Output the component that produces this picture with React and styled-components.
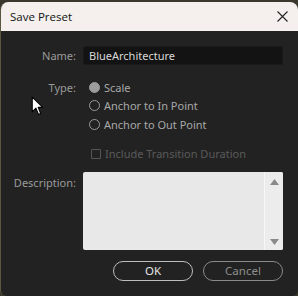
import styled, { createGlobalStyle } from "styled-components";

const Global = createGlobalStyle`
  html, body { margin: 0; padding: 0; }
  body {
    width: 298px;
    height: 296px;
    overflow: hidden;
    background: #3a372c;
    font-family: "Noto Sans", "Open Sans", sans-serif;
  }
`;

const Win = styled.div`
  position: relative;
  margin-top: 2px;
  width: 298px;
  height: 294px;
  box-sizing: border-box;
  border-left: 1px solid #5a5640;
  border-radius: 8px 8px 6px 6px;
  overflow: hidden;
  background: #222222;
  display: flex;
  flex-direction: column;
`;

const TitleBar = styled.div`
  height: 29px;
  flex: 0 0 29px;
  background: #f5f0ee;
  display: flex;
  align-items: center;
  justify-content: space-between;
  padding: 0 9px 0 9px;
  color: #111;
  font-family: "Open Sans", "Noto Sans", sans-serif;
  font-size: 11.5px;
`;

const Close = styled.svg`
  width: 11px;
  height: 11px;
  margin-right: 1px;
`;

const Body = styled.div`
  display: grid;
  grid-template-columns: 75px 200px;
  column-gap: 7px;
  padding: 15px 0 0 0;
  font-size: 11px;
  color: #a4a4a4;
`;

const Label = styled.div`
  text-align: right;
  line-height: 19px;
  margin-top: ${(p) => p.$top || 0}px;
  color: #9a9a9a;
`;

const Field = styled.div`
  margin-top: ${(p) => p.$top || 0}px;
`;

const TextInput = styled.div`
  height: 19px;
  box-sizing: border-box;
  background: #131313;
  border: 1px solid #1a1a1a;
  border-radius: 2px;
  color: #d8d8d8;
  line-height: 17px;
  padding-left: 5px;
  font-size: 11px;
`;

const RadioList = styled.div`
  display: flex;
  flex-direction: column;
`;

const Option = styled.div`
  display: flex;
  align-items: center;
  height: 18.5px;
  gap: 4px;
  padding-left: 6px;
  color: ${(p) => (p.$dim ? "#5a5a5a" : "#a8a8a8")};
  font-size: 11px;
`;

const Radio = styled.span`
  width: 11px;
  height: 11px;
  box-sizing: border-box;
  border-radius: 50%;
  border: 1.5px solid #9a9a9a;
  background: ${(p) => (p.$on ? "#9c9c9c" : "transparent")};
`;

const Check = styled.span`
  width: 10px;
  height: 10px;
  box-sizing: border-box;
  border: 1px solid #555;
  border-radius: 1px;
  margin-left: 2px;
`;

const Area = styled.div`
  height: 78px;
  display: flex;
  background: #e8e8e8;
  border-radius: 2px;
  overflow: hidden;
`;

const AreaText = styled.div`
  flex: 1;
`;

const Scroll = styled.div`
  width: 18px;
  border-left: 1px solid #f7f7f7;
  background: #ececec;
  display: flex;
  flex-direction: column;
  justify-content: space-between;
  align-items: center;
  padding: 7px 0 5px;
`;

const Arrow = styled.svg`
  width: 9px;
  height: 6px;
`;

const Buttons = styled.div`
  grid-column: 2;
  display: flex;
  justify-content: flex-end;
  gap: 10px;
  margin-top: 11px;
`;

const Btn = styled.div`
  width: 80px;
  height: 20px;
  box-sizing: border-box;
  border: 1px solid ${(p) => (p.$primary ? "#bdbdbd" : "#8a8a8a")};
  border-radius: 10px;
  text-align: center;
  line-height: 18px;
  font-size: 11.5px;
  color: ${(p) => (p.$primary ? "#e4e4e4" : "#8e8e8e")};
`;

const Cursor = styled.svg`
  position: absolute;
  left: 30px;
  top: 94px;
  width: 13px;
  height: 20px;
`;

export default function App() {
  return (
    <>
      <Global />
      <Win>
        <TitleBar>
          <span>Save Preset</span>
          <Close viewBox="0 0 11 11">
            <path d="M0.5 0.5 L10.5 10.5 M10.5 0.5 L0.5 10.5" stroke="#222" strokeWidth="1.1" />
          </Close>
        </TitleBar>
        <Body>
          <Label>Name:</Label>
          <Field>
            <TextInput>BlueArchitecture</TextInput>
          </Field>

          <Label $top={13}>Type:</Label>
          <Field $top={13}>
            <RadioList>
              <Option>
                <Radio $on />
                Scale
              </Option>
              <Option>
                <Radio />
                Anchor to In Point
              </Option>
              <Option>
                <Radio />
                Anchor to Out Point
              </Option>
            </RadioList>
          </Field>

          <div />
          <Field $top={11}>
            <Option $dim>
              <Check />
              Include Transition Duration
            </Option>
          </Field>

          <Label $top={10}>Description:</Label>
          <Field $top={9}>
            <Area>
              <AreaText />
              <Scroll>
                <Arrow viewBox="0 0 9 6">
                  <path d="M0 6 L4.5 0 L9 6 Z" fill="#8a8a8a" />
                </Arrow>
                <Arrow viewBox="0 0 9 6">
                  <path d="M0 0 L9 0 L4.5 6 Z" fill="#8a8a8a" />
                </Arrow>
              </Scroll>
            </Area>
          </Field>

          <Buttons>
            <Btn $primary>OK</Btn>
            <Btn>Cancel</Btn>
          </Buttons>
        </Body>
        <Cursor viewBox="0 0 12 19">
          <path d="M1 1 L1 15 L4.5 11.5 L7 17.5 L9 16.6 L6.6 10.8 L11 10.8 Z" fill="#fff" stroke="#000" strokeWidth="1" strokeLinejoin="round" />
        </Cursor>
      </Win>
    </>
  );
}
